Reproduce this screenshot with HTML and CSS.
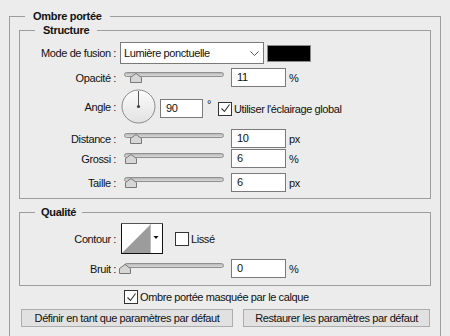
FILE: index.html
```html
<!DOCTYPE html>
<html lang="fr">
<head>
<meta charset="utf-8">
<title>Ombre portée</title>
<link rel="stylesheet" href="styles.css">
</head>
<body>
<fieldset class="outer">
  <legend class="legend legend-main">Ombre portée</legend>

  <fieldset class="group group-structure">
    <legend class="legend legend-sub">Structure</legend>

    <div class="row row-mode">
      <span class="label">Mode de fusion :</span>
      <div class="select">
        <span class="select-text">Lumière ponctuelle</span>
        <svg class="chevron" width="9" height="5" viewBox="0 0 9 5"><path d="M0.5 0.5 L4.5 4.5 L8.5 0.5" fill="none" stroke="#555" stroke-width="1"/></svg>
      </div>
      <div class="swatch"></div>
    </div>

    <div class="row row-opacity">
      <span class="label">Opacité :</span>
      <div class="slider"><div class="track"></div><svg class="thumb" style="left:6px" width="12" height="10" viewBox="0 0 12 10"><polygon points="0.5,4.5 6,0.5 11.5,4.5 11.5,9.5 0.5,9.5" fill="#d6d6d6" stroke="#777"/></svg></div>
      <div class="input">11</div>
      <span class="unit">%</span>
    </div>

    <div class="row row-angle">
      <span class="label">Angle :</span>
      <svg class="dial" width="36" height="36" viewBox="0 0 36 36">
        <defs>
          <linearGradient id="dg" x1="0" y1="0" x2="0" y2="1">
            <stop offset="0" stop-color="#fbfbfb"/>
            <stop offset="1" stop-color="#e2e2e2"/>
          </linearGradient>
        </defs>
        <circle cx="17.5" cy="17.5" r="16.5" fill="url(#dg)" stroke="#8a8a8a"/>
        <line x1="17.5" y1="2" x2="17.5" y2="17.5" stroke="#555" stroke-width="1"/>
        <circle cx="17.5" cy="17.5" r="1.6" fill="#444"/>
      </svg>
      <div class="input input-angle">90</div>
      <span class="degree">°</span>
      <span class="checkbox checked"><svg width="11" height="11" viewBox="0 0 11 11"><path d="M1.5 5.5 L4.5 8.5 L9.5 1.5" fill="none" stroke="#333" stroke-width="1.1"/></svg></span>
      <span class="check-label">Utiliser l'éclairage global</span>
    </div>

    <div class="row row-distance">
      <span class="label">Distance :</span>
      <div class="slider"><div class="track"></div><svg class="thumb" style="left:6px" width="12" height="10" viewBox="0 0 12 10"><polygon points="0.5,4.5 6,0.5 11.5,4.5 11.5,9.5 0.5,9.5" fill="#d6d6d6" stroke="#777"/></svg></div>
      <div class="input">10</div>
      <span class="unit">px</span>
    </div>

    <div class="row row-grossi">
      <span class="label">Grossi :</span>
      <div class="slider"><div class="track"></div><svg class="thumb" style="left:1px" width="12" height="10" viewBox="0 0 12 10"><polygon points="0.5,4.5 6,0.5 11.5,4.5 11.5,9.5 0.5,9.5" fill="#d6d6d6" stroke="#777"/></svg></div>
      <div class="input">6</div>
      <span class="unit">%</span>
    </div>

    <div class="row row-taille">
      <span class="label">Taille :</span>
      <div class="slider"><div class="track"></div><svg class="thumb" style="left:1px" width="12" height="10" viewBox="0 0 12 10"><polygon points="0.5,4.5 6,0.5 11.5,4.5 11.5,9.5 0.5,9.5" fill="#d6d6d6" stroke="#777"/></svg></div>
      <div class="input">6</div>
      <span class="unit">px</span>
    </div>
  </fieldset>

  <fieldset class="group group-quality">
    <legend class="legend legend-q">Qualité</legend>

    <div class="row row-contour">
      <span class="label">Contour :</span>
      <svg class="contour" width="42" height="31" viewBox="0 0 42 31">
        <rect x="0.5" y="0.5" width="41" height="30" fill="#fff" stroke="#111"/>
        <line x1="0" y1="0.5" x2="42" y2="0.5" stroke="#555"/>
        <polygon points="1,30 29,2 29,30" fill="#9c9c9c"/>
        <line x1="29.5" y1="1" x2="29.5" y2="30" stroke="#bdbdbd"/>
        <polygon points="32.5,13 37.5,13 35,16" fill="#111"/>
      </svg>
      <span class="checkbox lisse"></span>
      <span class="check-label">Lissé</span>
    </div>

    <div class="row row-bruit">
      <span class="label">Bruit :</span>
      <div class="slider"><div class="track"></div><svg class="thumb" style="left:-5px" width="12" height="10" viewBox="0 0 12 10"><polygon points="0.5,4.5 6,0.5 11.5,4.5 11.5,9.5 0.5,9.5" fill="#d6d6d6" stroke="#777"/></svg></div>
      <div class="input">0</div>
      <span class="unit">%</span>
    </div>
  </fieldset>

  <div class="row row-mask">
    <span class="checkbox checked"><svg width="11" height="11" viewBox="0 0 11 11"><path d="M1.5 5.5 L4.5 8.5 L9.5 1.5" fill="none" stroke="#333" stroke-width="1.1"/></svg></span>
    <span class="check-label">Ombre portée masquée par le calque</span>
  </div>

  <div class="row row-buttons">
    <button class="btn btn-default">Définir en tant que paramètres par défaut</button>
    <button class="btn btn-restore">Restaurer les paramètres par défaut</button>
  </div>
</fieldset>
</body>
</html>
```

FILE: styles.css
```css
html, body {
  margin: 0;
  padding: 0;
  background: #ececec;
  overflow: hidden;
}
body {
  font-family: "Liberation Sans", Arial, sans-serif;
  font-size: 11px;
  letter-spacing: -0.4px;
  color: #111;
  padding-top: 10px;
  height: 336px;
  box-sizing: border-box;
}
.outer {
  margin: 0 9px;
  padding: 0;
  border: 1px solid #9d9d9d;
  border-bottom: 0;
  height: 326px;
  box-sizing: border-box;
  min-width: 0;
}
.legend {
  font-weight: bold;
  line-height: 13px;
  padding: 0 8px;
  color: #111;
  letter-spacing: -0.3px;
}
.legend-main { margin-left: 15px; }
.legend-sub { margin-left: 15px; }
.legend-q { margin-left: 15px; padding: 0 6px; }

.group {
  margin: 1px 9px 0;
  padding: 0;
  border: 1px solid #9d9d9d;
  min-width: 0;
}
.group-structure { padding-bottom: 6px; }
.group-quality { margin-top: 7px; padding-bottom: 7px; }

.row {
  display: flex;
  align-items: center;
}
.label {
  width: 96px;
  text-align: right;
  flex: none;
  white-space: nowrap;
}

.row-mode { margin-top: 5px; height: 22px; }
.select {
  margin-left: 4px;
  width: 144px;
  height: 22px;
  box-sizing: border-box;
  background: #fff;
  border: 1px solid #7a7a7a;
  display: flex;
  align-items: center;
  padding-left: 3px;
}
.select-text { flex: 1; }
.chevron { margin-right: 4px; }
.swatch {
  margin-left: 3px;
  width: 44px;
  height: 17px;
  box-sizing: border-box;
  background: #000;
  border: 1px solid #8a8a8a;
}

.slider {
  position: relative;
  margin-left: 8px;
  width: 100px;
  height: 19px;
  flex: none;
}
.track {
  position: absolute;
  left: 0;
  right: 0;
  top: 4px;
  height: 5px;
  box-sizing: border-box;
  border: 1px solid #8f8f8f;
  border-radius: 3px;
  background: linear-gradient(#b9b9b9, #d9d9d9);
}
.thumb {
  position: absolute;
  top: 5px;
}
.input {
  margin-left: 7px;
  width: 55px;
  height: 19px;
  box-sizing: border-box;
  background: #fff;
  border: 1px solid #7a7a7a;
  padding-left: 5px;
  line-height: 17px;
  flex: none;
}
.unit { margin-left: 3px; }

.row-opacity { margin-top: 4px; height: 19px; }
.row-angle { margin-top: 2px; height: 36px; }
.dial { margin-left: 5px; flex: none; }
.input-angle { margin-left: 3px; width: 43px; margin-top: 3px; }
.degree { margin-left: 4px; margin-top: -6px; }
.checkbox {
  width: 14px;
  height: 14px;
  box-sizing: border-box;
  border: 1px solid #333;
  background: #fff;
  display: inline-flex;
  align-items: center;
  justify-content: center;
  flex: none;
}
.row-angle .checkbox { margin-left: 7px; margin-top: 3px; }
.row-angle .check-label { margin-left: 2px; margin-top: 3px; }

.row-distance { margin-top: 4px; height: 19px; }
.row-grossi { margin-top: 1px; height: 19px; }
.row-taille { margin-top: 5px; height: 19px; }

.row-contour { margin-top: 4px; height: 31px; }
.contour { margin-left: 5px; flex: none; }
.lisse { margin-left: 12px; }
.row-contour .check-label { margin-left: 2px; }

.row-bruit { margin-top: 5px; height: 19px; }

.row-mask { margin-top: 4px; height: 14px; }
.row-mask .checkbox { margin-left: 114px; }
.row-mask .check-label { margin-left: 2px; }

.row-buttons { margin-top: 5px; gap: 10px; }
.btn {
  font-family: inherit;
  font-size: 11px;
  letter-spacing: -0.4px;
  color: #111;
  height: 18px;
  padding: 0;
  background: #e1e1e1;
  border: 1px solid #adadad;
  border-radius: 0;
}
.btn-default { margin-left: 11px; width: 212px; }
.btn-restore { width: 187px; }
```
